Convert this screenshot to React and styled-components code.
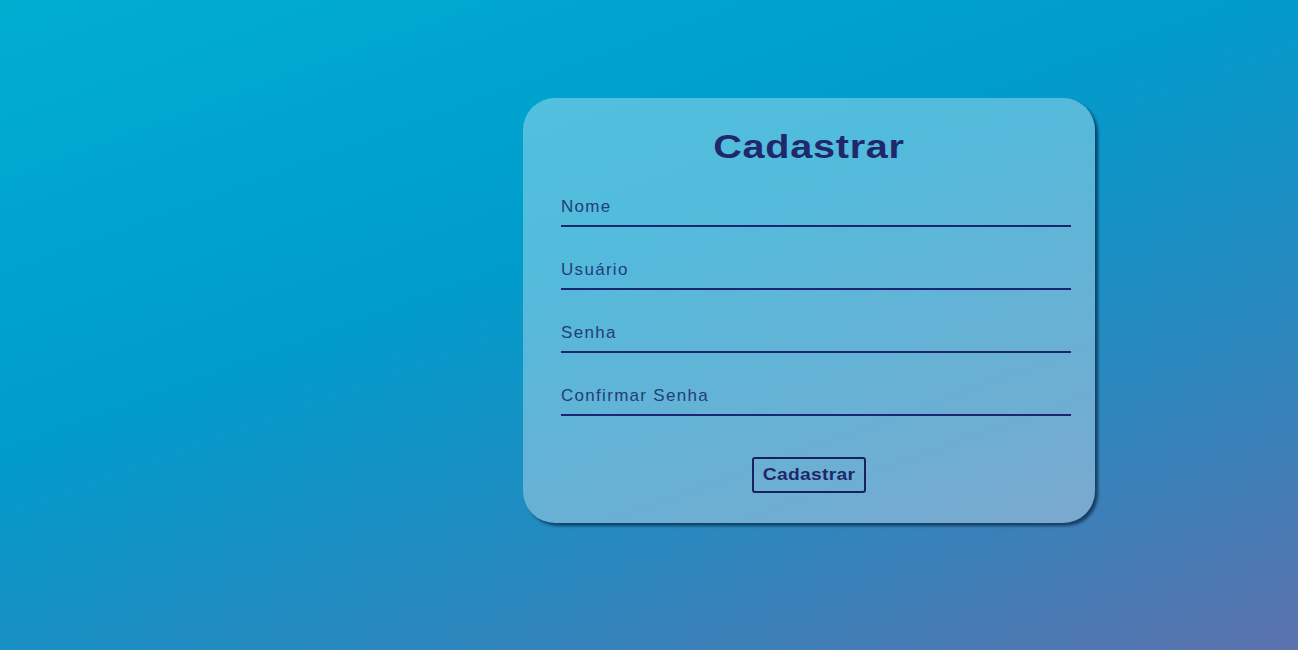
import React from "react";
import styled, { createGlobalStyle } from "styled-components";

const GlobalStyle = createGlobalStyle`
  html, body {
    margin: 0;
    padding: 0;
    height: 100%;
  }
  body {
    font-family: "Liberation Sans", Arial, sans-serif;
  }
  #root {
    height: 100%;
  }
`;

const Page = styled.main`
  min-height: 100vh;
  box-sizing: border-box;
  display: flex;
  justify-content: flex-end;
  align-items: flex-start;
  padding: 98px 203px 0 0;
  background: linear-gradient(160deg, #00aed2 0%, #009ccc 40%, #2a88be 70%, #5c72ad 100%);
`;

const Card = styled.form`
  width: 572px;
  height: 425px;
  box-sizing: border-box;
  padding: 30px 26px 0 38px;
  border-radius: 32px;
  background: rgba(255, 255, 255, 0.32);
  box-shadow: 3px 3px 3px rgba(0, 20, 50, 0.6);
  display: flex;
  flex-direction: column;
  align-items: stretch;
`;

const Title = styled.h1`
  margin: 0 0 24px -12px;
  text-align: center;
  font-size: 33px;
  font-weight: 700;
  letter-spacing: 0.6px;
  line-height: 37px;
  color: #1f286b;
  transform: scaleX(1.2);
`;

const Fields = styled.div`
  display: flex;
  flex-direction: column;
  gap: 25px;
`;

const Input = styled.input`
  width: 510px;
  height: 38px;
  box-sizing: border-box;
  padding: 0;
  border: none;
  border-bottom: 2px solid #1c2670;
  background: transparent;
  font-family: "Liberation Sans", Arial, sans-serif;
  font-size: 17px;
  letter-spacing: 1.3px;
  color: #1f286b;
  outline: none;

  &::placeholder {
    color: #233d78;
    opacity: 1;
  }
`;

const Actions = styled.div`
  display: flex;
  justify-content: center;
  margin: 41px 0 0 -12px;
`;

const Button = styled.button`
  width: 114px;
  height: 36px;
  padding: 0 0 0 1px;
  border: 2px solid #1a2160;
  border-radius: 3px;
  background: transparent;
  font-family: "Liberation Sans", Arial, sans-serif;
  font-size: 17px;
  font-weight: 700;
  color: #1f286b;
  cursor: pointer;
`;

const ButtonLabel = styled.span`
  display: inline-block;
  letter-spacing: 0.3px;
  transform: scaleX(1.13);
`;

const fields = ["Nome", "Usuário", "Senha", "Confirmar Senha"];

const App = () => {
  return (
    <>
      <GlobalStyle />
      <Page>
        <Card onSubmit={(e) => e.preventDefault()}>
          <Title>Cadastrar</Title>
          <Fields>
            {fields.map((f) => (
              <Input
                key={f}
                type={f.includes("Senha") ? "password" : "text"}
                placeholder={f}
              />
            ))}
          </Fields>
          <Actions>
            <Button type="submit">
              <ButtonLabel>Cadastrar</ButtonLabel>
            </Button>
          </Actions>
        </Card>
      </Page>
    </>
  );
};

export default App;
